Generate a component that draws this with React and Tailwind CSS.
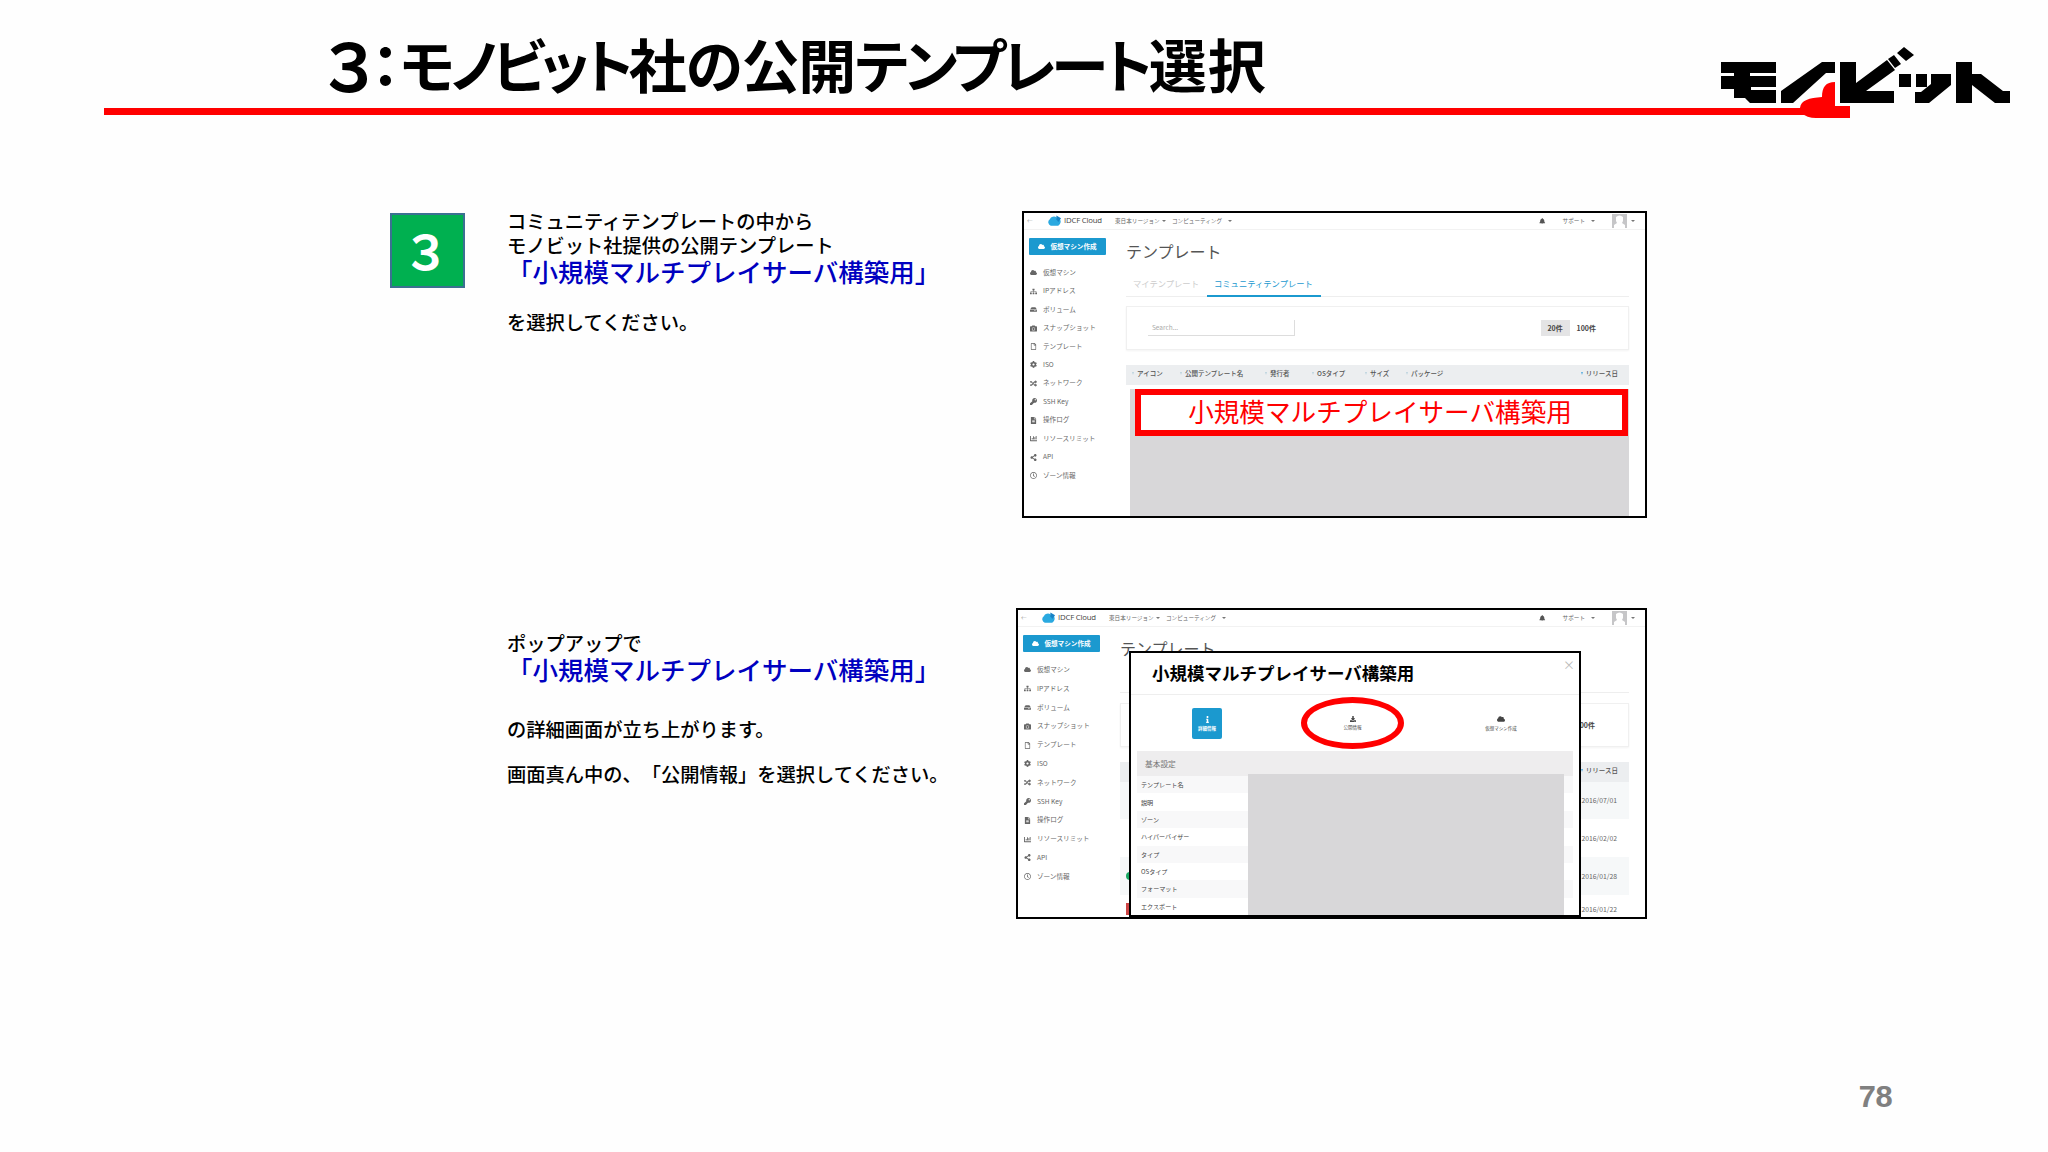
import React from 'react';
import { FaBell, FaCamera, FaChartBar, FaCloud, FaCog, FaDownload, FaFileAlt, FaHdd, FaInfo, FaKey, FaRandom, FaRegClock, FaRegFile, FaShareAlt, FaSitemap } from 'react-icons/fa';

const menu = [
    { icon: FaCloud, label: '仮想マシン' },
    { icon: FaSitemap, label: 'IPアドレス' },
    { icon: FaHdd, label: 'ボリューム' },
    { icon: FaCamera, label: 'スナップショット' },
    { icon: FaRegFile, label: 'テンプレート' },
    { icon: FaCog, label: 'ISO' },
    { icon: FaRandom, label: 'ネットワーク' },
    { icon: FaKey, label: 'SSH Key' },
    { icon: FaFileAlt, label: '操作ログ' },
    { icon: FaChartBar, label: 'リソースリミット' },
    { icon: FaShareAlt, label: 'API' },
    { icon: FaRegClock, label: 'ゾーン情報' },
];

const details = ['テンプレート名', '説明', 'ゾーン', 'ハイパーバイザー', 'タイプ', 'OSタイプ', 'フォーマット', 'エクスポート'];

const Logo = ({ className }) => (
    <svg viewBox="0 0 368 100" className={className}>
        <path fill="#000" d="M41 32H96V43H41ZM54 42H70V47H54ZM41 46H96V57H71V60H96V73H70L65 68H54V59H41Z" />
        <path fill="#000" d="M101 73V61L142 32H155V43H146L113 73Z" />
        <path fill="#000" d="M160 32H176V53L207 30L215 40L186 61H214V73H160Z" />
        <path fill="#000" d="M208 29L214 25L221 34L215 38ZM217 23L224 17L234 25L226 31Z" />
        <path fill="#000" d="M219 44H231V57H219ZM236 44H247V57H236ZM251 44H271V55L249 73H235V62H241L251 54Z" />
        <path fill="#000" d="M276 32H292V44H301L323 61H330V73H315L292 55V73H276Z" />
        <path fill="#f00" d="M120 78C121 70 129 68 142 67C142 57 146 52 155 52V76H170V88H136C130 88 125 86 121 83Z" />
    </svg>
)

const Caret = () => <span className="border-x-2 border-t-2 border-x-transparent border-t-[#777]" />

const TopBar = () => (
    <div className="flex h-[17px] shrink-0 items-center border-b border-[#f2f2f2] text-[5.6px] text-[#666]">
        <span className="w-[23px] pl-[3px] text-[#999]">←</span>
        <svg viewBox="0 0 16 12" className="h-3 w-[15px]">
            <path fill="#2aa9e0" d="M4 11A4 4 0 0 1 3 4A5 5 0 0 1 10 2L12 6L13 3A5 5 0 0 1 12 11Z" />
            <path fill="#1782c5" d="M10 0L15 3L12 7L10 4Z" />
        </svg>
        <span className="ml-[2px] w-[51px] font-['Open_Sans'] text-[7.8px] tracking-[-0.2px] text-[#444]">IDCF Cloud</span>
        <span className="w-[47px]">東日本リージョン</span>
        <Caret />
        <span className="ml-[6px] w-[56px]">コンピューティング</span>
        <Caret />
        <FaBell className="mr-[17px] ml-auto text-[6.5px] text-[#555]" />
        <span className="mr-[6px]">サポート</span>
        <Caret />
        <svg viewBox="0 0 15 14" className="mr-1 ml-[17px] h-[14px] w-[15px]">
            <rect width="15" height="14" fill="#c6c6c8" />
            <path fill="#fff" d="M4 3Q7.500 0 11 3V7L10 9L13 11V14H2V11L5 9L4 7Z" />
        </svg>
        <Caret />
        <span className="w-[10px]" />
    </div>
)

const SideMenu = ({ rowClass }) => (
    <div className="w-[102px] shrink-0 pt-2 pl-[5px]">
        <div className="flex h-[17px] w-[77px] items-center justify-center gap-[5px] rounded-[1px] bg-[#1b99cf] text-[6.6px] font-bold text-white">
            <FaCloud className="text-[7px]" />
            仮想マシン作成
        </div>
        <ul className="mt-[8.5px]">
            {menu.map(({ icon: Icon, label }) => (
                <li key={label} className={`flex items-center gap-[6px] pl-[1px] text-[6.6px] text-[#666] ${rowClass}`}>
                    <Icon className="w-[7px] text-[7px]" />
                    {label}
                </li>
            ))}
        </ul>
    </div>
)

const Tabs = () => (
    <>
        <span className="w-[81px] pl-[7px] text-[#ccc]">マイテンプレート</span>
        <span className="h-[33px] w-[114px] border-b-2 border-[#1b99cf] pl-[7px] text-[#1b99cf]">コミュニティテンプレート</span>
    </>
)

// covered: the popup lies over the tabs and the left part of the table
const Console = ({ rowClass, covered, children }) => (
    <div className="flex h-full flex-col overflow-hidden">
        <TopBar />
        <div className="flex min-h-0 flex-1">
            <SideMenu rowClass={rowClass} />
            <div className="mr-4 flex flex-1 flex-col">
                <h2 className="mt-[9px] h-[25px] text-[16px] leading-6 text-[#555]">テンプレート</h2>
                <div className="flex h-[33px] shrink-0 border-b border-[#eee] text-[8.3px] leading-[38px]">
                    {!covered && <Tabs />}
                </div>
                <div className={`flex h-[44px] shrink-0 items-center border border-[#f0f0f0] text-[7px] shadow-xs ${covered ? 'mt-[10px]' : 'mt-[9px]'}`}>
                    {!covered && <span className="ml-[21px] h-4 w-[147px] border-r border-b border-[#ddd] pl-1 text-[6.5px] leading-[15px] text-[#aaa]">Search...</span>}
                    {!covered && <span className="ml-auto flex h-4 w-[29px] items-center justify-center bg-[#e4e4e5] font-bold text-[#444]">20件</span>}
                    <span className={covered ? 'mr-[33px] ml-auto font-bold text-[#444]' : 'mr-[32px] ml-[7px] font-bold text-[#444]'}>100件</span>
                </div>
                {children}
            </div>
        </div>
    </div>
)

const Sort = ({ className }) => <span className={`mr-[3px] inline-block border-x-[1.5px] border-t-[3px] border-x-transparent align-middle ${className}`} />

const Th = ({ className, children }) => (
    <span className={`-ml-[6px] ${className}`}>
        <Sort className="border-t-[#bcd3de]" />
        {children}
    </span>
)

const TableHead = ({ covered }) => (
    <div className="mt-[15px] flex h-5 shrink-0 items-center bg-[#eceef0] pb-[3px] pl-3 text-[6.5px] font-medium text-[#555]">
        {!covered && (
            <>
                <Th className="w-[54px]">アイコン</Th>
                <Th className="w-[91px]">公開テンプレート名</Th>
                <Th className="w-[53px]">発行者</Th>
                <Th className="w-[59px]">OSタイプ</Th>
                <Th className="w-[47px]">サイズ</Th>
                <Th className="">パッケージ</Th>
            </>
        )}
        <span className="mr-[11px] ml-auto">
            <Sort className="border-t-[#5aaee0]" />
            リリース日
        </span>
    </div>
)

const Popup = () => (
    <div className="absolute top-[41px] left-[111px] flex h-[266px] w-[452px] flex-col border-2 border-black bg-white">
        <div className="flex h-[42px] shrink-0 justify-between border-b border-[#eee] pr-1 pl-[21px]">
            <span className="mt-[8px] text-[17.5px] leading-6 font-bold whitespace-nowrap text-black">小規模マルチプレイサーバ構築用</span>
            <span className="mt-1 text-[12px] leading-4 text-[#bbb]">×</span>
        </div>
        <div className="flex h-[56px] shrink-0 items-center text-[5px] text-[#444]">
            <div className="ml-[61px] flex h-[31px] w-[30px] flex-col items-center justify-center gap-[2px] rounded-[2px] bg-[#1b99cf] font-bold text-white">
                <FaInfo className="text-[7px]" />
                <span className="text-[4.5px] leading-[6px]">詳細情報</span>
            </div>
            <div className="ml-[79px] flex h-[52px] w-[103px] flex-col items-center justify-center gap-[2px] rounded-[50%] border-[6px] border-[#f00]">
                <FaDownload className="text-[6px]" />
                <span className="text-[4.5px] leading-[6px]">公開情報</span>
            </div>
            <div className="ml-[79px] flex w-[36px] flex-col items-center gap-[2px]">
                <FaCloud className="text-[8px]" />
                <span className="text-[4.5px] leading-[6px] whitespace-nowrap">仮想マシン作成</span>
            </div>
        </div>
        <div className="mx-[6px] flex h-[25px] shrink-0 items-center bg-[#eeedee] pl-2 text-[7.7px] text-[#777]">基本設定</div>
        <div className="relative mx-[6px] min-h-0 flex-1">
            {details.map((label) => (
                <div key={label} className="flex h-[17.4px] items-center pl-1 text-[6.1px] text-[#444] odd:bg-[#f8f8f9]">{label}</div>
            ))}
            <div className="absolute -top-[2px] right-[9px] bottom-0 left-[111px] bg-[#d8d7d9]" />
        </div>
    </div>
)

const App = () => {
    return (
        <div className="relative flex h-[1152px] w-[2048px] flex-col overflow-hidden bg-[#fefefe] font-['Noto_Sans_CJK_JP',sans-serif] text-black [text-spacing-trim:space-all]">
            <header className="relative h-[115px] shrink-0">
                <h1 className="flex h-[108px] items-center pt-[18px] pl-[325px] text-[58px] leading-none font-bold whitespace-nowrap [font-feature-settings:'palt']">
                    <span className="flex w-[46px] justify-center text-[66px]">３</span>
                    <span className="flex w-[29px] justify-center">：</span>
                    <span className="tracking-[-4.8px]">モノビット</span>
                    <span className="tracking-[-1.2px]">社の公開</span>
                    <span className="tracking-[-3.9px]">テンプレート</span>
                    <span className="tracking-[1px]">選択</span>
                </h1>
                <div className="ml-[104px] h-[7px] w-[1700px] bg-[#f00]" />
                <Logo className="absolute top-[30px] left-[1680px] h-[100px] w-[368px]" />
            </header>

            <section className="mt-[96px] flex h-[307px] shrink-0">
                <div className="mt-[2px] ml-[390px] flex h-[75px] w-[75px] items-center justify-center border-2 border-[#3b7191] bg-[#00b050] pr-[3px] pb-[2px] text-[47px] leading-none font-bold text-white">３</div>
                <div className="ml-[42px] w-[515px] shrink-0 text-[19.25px] leading-6 font-medium">
                    <p className="-mt-[2px]">コミュニティテンプレートの中から</p>
                    <p>モノビット社提供の公開テンプレート</p>
                    <p className="text-[25.5px] leading-[28px] text-[#0000c0]">「小規模マルチプレイサーバ構築用」</p>
                    <p className="mt-[25px]">を選択してください。</p>
                </div>
                <div className="w-[625px] border-2 border-black bg-white">
                    <Console rowClass="h-[18.45px]">
                        <TableHead />
                        <div className="mt-1 ml-1 flex-1 bg-[#d8d7d9]">
                            <div className="ml-[5px] flex h-[47px] w-[493px] items-center justify-center border-[6px] border-[#f00] bg-white pr-[3px] pb-[4px] text-[25.6px] leading-none whitespace-nowrap text-[#f00]">小規模マルチプレイサーバ構築用</div>
                        </div>
                    </Console>
                </div>
            </section>

            <section className="mt-[90px] flex h-[311px] shrink-0">
                <div className="ml-[507px] w-[509px] shrink-0 pt-[23px] text-[19.25px] leading-6 font-medium">
                    <p>ポップアップで</p>
                    <p className="text-[25.5px] leading-[27px] text-[#0000c0]">「小規模マルチプレイサーバ構築用」</p>
                    <p className="mt-[35px]">の詳細画面が立ち上がります。</p>
                    <p className="mt-[21px]">画面真ん中の、「公開情報」を選択してください。</p>
                </div>
                <div className="relative w-[631px] border-2 border-black bg-white">
                    <Console rowClass="h-[18.8px]" covered>
                        <TableHead covered />
                        <div className="text-right text-[6.8px] text-[#666]">
                            <div className="flex h-[37px] items-center justify-end bg-[#f6f8f9] pr-3">2016/07/01</div>
                            <div className="flex h-[38px] items-center justify-end pr-3">2016/02/02</div>
                            <div className="flex h-[38px] items-center justify-between bg-[#f6f8f9] pr-3 pl-[6px]">
                                <span className="h-2 w-2 rounded-full bg-[#1aa864]" />
                                2016/01/28
                            </div>
                            <div className="flex h-[28px] items-center justify-between pr-3 pl-[6px]">
                                <span className="h-3 w-2 bg-[#c44]" />
                                2016/01/22
                            </div>
                        </div>
                    </Console>
                    <Popup />
                </div>
            </section>

            <footer className="mt-[155px] ml-[1858px] font-['Liberation_Mono',monospace] text-[31px] leading-[50px] font-bold tracking-[-1.8px] text-[#808080]">78</footer>
        </div>
    )
}

export default App;
